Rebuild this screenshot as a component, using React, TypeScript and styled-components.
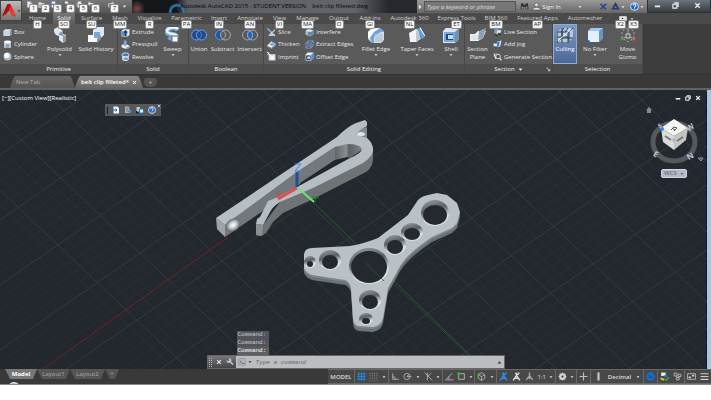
import React from "react";
import styled, { createGlobalStyle, css } from "styled-components";

const Global = createGlobalStyle`
  *, *::before, *::after { box-sizing: border-box; }
  body { margin: 0; background: #fff; font-family: "Open Sans", "Noto Sans", sans-serif; font-size: 6px; line-height: 8px; color: #dcdcdc; }
  button, input { font: inherit; color: inherit; border: 0; padding: 0; margin: 0; background: none; }
  button { white-space: nowrap; }
  svg { display: block; flex: none; }
`;

/* ---------- icons ---------- */

const paths: Record<string, React.ReactNode> = {
  box: <><path d="M1 5l3-3h11v9l-3 3H1z" fill="#dfe6ee" /><path d="M12 5l3-3v9l-3 3z" fill="#8194a8" /><path d="M1 5h11v9H1z" fill="#c9d5e1" /></>,
  cylinder: <><path d="M2 3h12v11H2z" fill="#c5d0dc" /><ellipse cx="8" cy="3.500" rx="6" ry="2.500" fill="#fff" /><path d="M5 7h6v7H5z" fill="#8fa0b2" /></>,
  sphere: <><circle cx="8" cy="8" r="7" fill="#aebccb" /><circle cx="6.500" cy="6" r="4.500" fill="#fff" /></>,
  polysolid: <><path d="M2 2l4-2 5 4v3l3 1v6l-3 2-4-3V9L4 8 2 5z" fill="#dde5ed" /><path d="M7 6l4-2v4l3 1v5l-3 2V9l-4-1z" fill="#8b9aa9" /></>,
  history: <><path d="M5 3l3-3h8v8l-3 3H5z" fill="#dde8f6" /><path d="M0 8h5V4l4 1v6h3l-3 4H0z" fill="#f5f7fa" /><path d="M6 5h6v6H6z" fill="#78a7df" /><path d="M10 11l3-3v4l-4 4v-4z" fill="#8796a6" /></>,
  extrude: <><path d="M1 5l4-3h10v10l-3 3H1z" fill="#e3ebf3" /><path d="M2 6h9v8H2z" fill="#5389c4" /><path d="M8 5v9M5 8l3-3 3 3" stroke="#173f73" strokeWidth="2" fill="none" /></>,
  presspull: <><path d="M1 9l6-3 8 4v4l-7 2-7-3z" fill="#e7ecf1" /><path d="M5 1h5v6l2 1-5 3-4-3 2-1z" fill="#79a7db" /><path d="M8 14l7-3v3l-7 2z" fill="#8797a8" /></>,
  revolve: <><path d="M2 6h12v7l-3 3H5l-3-3z" fill="#dce4ec" /><ellipse cx="8" cy="5" rx="6.500" ry="3.500" fill="#487bb5" stroke="#e1eaf4" strokeWidth="1.500" /><path d="M5 10h8v4H5z" fill="#789cc2" /></>,
  sweep: <><path d="M13 3C10-1 2 1 2 5c0 4 10 1 9 5-1 2-5 2-7 0" fill="none" stroke="#6ea3dc" strokeWidth="5" /><path d="M13 2C9-1 2 1 2 4c0 4 11 2 10 6" fill="none" stroke="#edf4fb" strokeWidth="2.500" /><path d="M7 9h6v6H7z" fill="#fff" stroke="#606a75" /></>,
  union: <><circle cx="5.500" cy="8" r="5" fill="#21498d" stroke="#70a2ee" /><circle cx="10.500" cy="8" r="5" fill="#21498d" stroke="#70a2ee" /><circle cx="5.500" cy="8" r="5" fill="none" stroke="#557fc3" /></>,
  subtract: <><circle cx="5.500" cy="8" r="5" fill="#24559e" stroke="#6294df" /><circle cx="10.500" cy="8" r="5" fill="#5b5b5b" stroke="#a6acb3" /><path d="M8 3.700a5 5 0 010 8.600" stroke="#aaa" fill="none" /></>,
  intersect: <><circle cx="5.500" cy="8" r="5" fill="none" stroke="#a6a9ad" /><circle cx="10.500" cy="8" r="5" fill="none" stroke="#a6a9ad" /><path d="M8 3.700a5 5 0 010 8.600 5 5 0 010-8.600z" fill="#2465bb" stroke="#7aa9e6" /></>,
  slice: <><path d="M1 1l13 13" stroke="#f1f3f6" strokeWidth="2" /><path d="M14 2L5 10l-3 4h10l2-2-4-3 5-5z" fill="#b8cbe0" /><path d="M1 1l7 3-2 3z" fill="#4f8ed1" /></>,
  thicken: <><path d="M0 10l8-8 8 5-8 7z" fill="#f0f4f8" /><path d="M4 8l6-5 5 4-6 4z" fill="#7eace0" /><path d="M0 10l8 4 8-7v3l-8 6-8-4z" fill="#738ba5" /></>,
  imprint: <><path d="M3 4h12v11H3z" fill="#dce4ed" /><path d="M7 8h5v5H7z" fill="#fff" /><path d="M0 0l8 8M3 0v4H0" stroke="#fff" strokeWidth="1.500" /></>,
  interfere: <><path d="M1 5l5-3 9 2v7l-5 4-9-3z" fill="#b5bec8" /><path d="M5 7l6-3 4 2v5l-5 4-5-3z" fill="#6688b0" /><path d="M1 5l5-3 9 2-5 3z" fill="#e2e7ec" /></>,
  extract: <path d="M1.500 5.500l4-4h9v9l-4 4h-9zM1.500 5.500h9v9M10.500 5.500l4-4M5.500 1.500v9h9M1.500 14.500l4-4" fill="none" stroke="#78a5df" strokeWidth="1.300" />,
  offset: <><path d="M1 5l4-4h10v10l-4 4H1z" fill="#edf4fb" /><path d="M2 6h8v8H2z" fill="#183b6c" /><path d="M4 8h5v4H4z" fill="#dbe7f4" /><path d="M11 5l4-4v10l-4 4z" fill="#5389c8" /></>,
  fillet: <><path d="M0 5l4-4h8l4 4v8l-3 3H4l-4-4z" fill="#d6dee7" /><path d="M0 5l4-4h8L6 5 2 11H0z" fill="#fff" /><path d="M6 5l6-4 4 3-5 2-5 4v6H4l-2-5z" fill="#66a4e4" /><path d="M7 7h8v8H7z" fill="#bdcad7" /></>,
  taper: <><path d="M0 6l7-4 4 1-3 12H1z" fill="#f0f3f7" /><path d="M8 2l4-2 4 10-3 2z" fill="#62a0df" /><path d="M7 4l2-1 3 9-5 3z" fill="#bdc9d6" /><path d="M11 1l5 8" stroke="#fff" /></>,
  shell: <><path d="M0 4l3-3h13v11l-4 4H0z" fill="#dce8f7" /><path d="M1 5h11v10H1z" fill="#72a9e9" /><path d="M3 7h7v6H3z" fill="#244873" /><path d="M5 8h5v4H5z" fill="#c5dff9" /><path d="M12 5l4-4v11l-4 4z" fill="#7b8fa4" /></>,
  section: <><path d="M0 7h5l3-3h8l-3 7-5 3H0z" fill="#f4f5f7" /><path d="M9 4l7-3-3 10-5 2z" fill="#90a0b1" /><path d="M1 8h7v5H1z" fill="#dfe4e9" /></>,
  live: <><path d="M2 3l6-3 3 3v5l-5 3-4-2z" fill="#6f9dce" /><path d="M7 5l8-2-2 6-6 2z" fill="#e7eaed" /><path d="M9 9l5 4M3 12l5 2" stroke="#38312b" strokeWidth="2" /></>,
  jog: <><path d="M1 6h6V3l8-2-2 10-6 2v-2H1z" fill="#dfe7f1" /><path d="M7 4l5-2-1 8-4 3z" fill="#3e83d1" /></>,
  generate: <><path d="M1 4l4-3 5 2v7H3z" fill="#777" /><circle cx="9" cy="8" r="4" fill="#4e5358" stroke="#eee" strokeWidth="1.500" /><path d="M12 11l3 4M2 3l3 9" stroke="#eee" strokeWidth="2" /></>,
  culling: <><path d="M0 5l5-4h11v10l-5 5H0z" fill="#b6c7df" /><path d="M0 5h11v11H0zM5 1v10h11M11 5l5-4M0 15l5-4M5 5v11M0 10h11M7 1L4 5M11 1L8 5M12 5v10" fill="none" stroke="#263c59" strokeWidth="1" /><path d="M1 14L14 2" stroke="#fff" /></>,
  filter: <><path d="M1 4l3-3h12v10l-4 4H1z" fill="#99c9ff" /><path d="M1 4h11v11H1z" fill="#e1efff" /><path d="M12 4l4-3v10l-4 4z" fill="#6497c6" /><circle cx="1.500" cy="14.500" r="1.500" fill="#176dd5" /></>,
  gizmo: <><path d="M8 1l6 3v7l-6 4-6-4V4z" fill="none" stroke="#aaa" strokeDasharray="2 2" /><path d="M8 2v7l6 3M8 9l-6 3" stroke="#9caab9" fill="none" /><path d="M6 7h4v4H6z" fill="#5b5b5b" stroke="#d3d3d3" /><circle cx="8" cy="1" r="1.300" fill="#4b7ab9" /><circle cx="2" cy="12" r="1.500" fill="#4c9c43" /><circle cx="14" cy="12" r="1.500" fill="#e05b42" /></>,
  doc: <><path d="M3 1h8l3 3v11H3z" fill="#f4f7fa" /><path d="M1 8h9M7 5l3 3-3 3" stroke="#146cb5" strokeWidth="2" fill="none" /></>,
  docOut: <><path d="M2 1h7l2 3v10H2z" fill="#aeb4bb" /><path d="M4 4h5M4 7h5M4 10h3" stroke="#555" /><path d="M7 11h8M12 8l3 3-3 3" stroke="#398ed0" strokeWidth="2" fill="none" /></>,
  copy: <><path d="M1 2h7v9H1z" fill="#c3c8cd" /><path d="M7 6h8v8H7z" fill="#d7eeff" stroke="#2876bc" strokeWidth="2" /><path d="M1 10v4h4" stroke="#111" strokeWidth="2" fill="none" /></>,
  help: <><circle cx="8" cy="8" r="7" fill="#2363bd" stroke="#e9f3ff" strokeWidth="1.500" /><path d="M5.500 6c0-4 5-3 5 0 0 2-2.500 1.500-2.500 4M8 11.500v1.500" fill="none" stroke="#fff" strokeWidth="2" /></>,
  binoculars: <><path d="M2 2h4v3h4V2h4l1 11h-5V9H6v4H1z" fill="#323232" /><path d="M3 8h2v4H3zM11 8h2v4h-2z" fill="#a5a5a5" /></>,
  user: <><circle cx="8" cy="5" r="3.500" fill="#d9dce0" stroke="#444" /><path d="M1 14c0-6 14-6 14 0z" fill="#e7e7e7" stroke="#444" /></>,
  exchange: <><path d="M1 3h4l9 10h-4zM11 3h4L5 13H1z" fill="#274b8d" /></>,
  share: <path d="M8 3L3 12h10zM8 2v6" fill="none" stroke="#293f6b" strokeWidth="3" />,
  wrench: <path d="M2 4a4 4 0 006 5l5 5 2-2-5-5a4 4 0 00-5-6l2 3-2 3z" fill="#c8c8c8" />,
  prompt: <><rect x="1" y="1" width="14" height="14" rx="2" fill="#aeb4bc" stroke="#7b838d" /><path d="M4 5l3 3-3 3M8 11h5" stroke="#454d58" strokeWidth="1.500" fill="none" /></>,
  grid: <path d="M3 1v14M8 1v14M13 1v14M1 3h14M1 8h14M1 13h14" stroke="#2084e0" strokeWidth="2" />,
  snap: <path d="M2 2v13M6 2v13M10 2v13M14 2v13" stroke="#aaa" strokeWidth="1.500" strokeDasharray="1.500 2.500" />,
  ortho: <path d="M3 2v11h11M3 9h4v4" fill="none" stroke="#b4b4b4" strokeWidth="1.500" />,
  polar: <><circle cx="7" cy="8" r="5.500" fill="none" stroke="#b4b4b4" strokeWidth="1.500" /><path d="M7 8h8M7 8l4-4" stroke="#b4b4b4" strokeWidth="1.500" /></>,
  iso: <path d="M1 1l14 14M6 1v14M6 8l7-6" stroke="#b4b4b4" strokeWidth="1.500" />,
  track: <path d="M1 14L13 2M1 14h14M7 8v6" stroke="#b4b4b4" strokeWidth="1.500" fill="none" />,
  osnap: <><path d="M3 3h10v10H3z" fill="none" stroke="#c0c0c0" strokeWidth="1.500" /><circle cx="3" cy="3" r="2.500" fill="#20c71f" /></>,
  osnap3: <><path d="M8 1l6 4v6l-6 4-6-4V5zM2 5l6 3 6-3M8 8v7" fill="none" stroke="#b4b4b4" strokeWidth="1.500" /><circle cx="4" cy="4" r="2.500" fill="#22bd2a" /></>,
  anno: <path d="M8 1v5L2 15M8 6l6 9M4 11h8M10 5l3-4M6 2l4 3" stroke="currentColor" strokeWidth="2.500" fill="none" />,
  annoPlain: <path d="M8 1v6L2 14M8 7l6 7M8 7v6" stroke="#a5a5a5" strokeWidth="2.500" fill="none" />,
  gear: <><path d="M8 1v14M1 8h14M3 3l10 10M13 3L3 13" stroke="#d4d4d4" strokeWidth="2" /><circle cx="8" cy="8" r="4" fill="none" stroke="#d4d4d4" strokeWidth="4" /><circle cx="8" cy="8" r="2" fill="#444" /></>,
  plus: <path d="M8 1v14M1 8h14" stroke="#c0c0c0" strokeWidth="2" />,
  unit: <path d="M6 1h4v14H6zM6 5h2M6 9h2M6 13h2" fill="#ddd" stroke="#777" />,
  quick: <><circle cx="8" cy="8" r="7.500" fill="#146fd0" /><path d="M4 9a4 4 0 007-2M5 5l6 6" stroke="#123c73" strokeWidth="1.500" fill="none" /></>,
  isolate: <><path d="M2 1h8v6H2z" fill="#e6edf5" /><path d="M6 7l6-3v6z" fill="#3477c9" /><path d="M1 11l6 3" stroke="#e6cf2b" strokeWidth="3" /><path d="M8 12l3 3 5-6" stroke="#3bb644" strokeWidth="2" fill="none" /></>,
  perf: <path d="M2 2h5v5H2zM9 4h5v4H9zM6 10h5v4H6zM5 7l3 3M11 8l-2 3" fill="none" stroke="#bcbcbc" strokeWidth="1.500" />,
  clean: <><path d="M1 3h14v10H1z" fill="none" stroke="#bcbcbc" strokeWidth="1.500" /><path d="M3 8h4v3H3zM9 5h4v3H9z" fill="#ccc" /></>,
  menu: <path d="M1 3h14M1 8h14M1 13h14" stroke="#d0d0d0" strokeWidth="2" />,
  page: <><path d="M3 1h7l4 4v10H3z" fill="#eee" /><path d="M10 1v4h4" stroke="#777" fill="none" /></>,
  folder: <><path d="M1 3h6l2 2h6v10H1z" fill="#ddd" /><path d="M1 8h14v7H1z" fill="#b2b2b2" /></>,
  save: <><path d="M1 1h14v14H1z" fill="#5d7ca4" /><path d="M4 1h8v5H4zM4 9h8v6H4z" fill="#eee" /></>,
  saveAs: <><path d="M1 1h14v14H1z" fill="#52637a" /><path d="M4 1h8v5H4z" fill="#eee" /><path d="M6 13l9-8" stroke="#e9872e" strokeWidth="3" /></>,
  print: <><path d="M1 5h14v8H1z" fill="#aaa" /><path d="M4 1h8v5H4zM4 10h8v5H4z" fill="#eee" /></>,
  undo: <path d="M5 2L1 6l4 4M1 6h8c5 0 5 7 1 8" fill="none" stroke="#e5e5e5" strokeWidth="2.500" />,
  redo: <path d="M11 2l4 4-4 4M15 6H7c-5 0-5 7-1 8" fill="none" stroke="#c5c5c5" strokeWidth="2.500" />,
  logo: <><path d="M8 0h4l8 18-6-2-4-7-4 6-6 3z" fill="#d62020" /><path d="M8 0l3 0 2 8-8 5-5 5z" fill="#a81014" /><path d="M11 3l9 15-6-2-4-7z" fill="#ef3b31" /></>,
  restore: <path d="M5 2h9v8h-3M2 5h9v9H2z" fill="none" stroke="currentColor" strokeWidth="2.500" />,
  close: <path d="M3 3l10 10M13 3L3 13" stroke="currentColor" strokeWidth="3" />,
  minimise: <path d="M2 10h12" stroke="currentColor" strokeWidth="4" />,
  caret: <path d="M2 5h12l-6 7z" fill="currentColor" />,
  caretUp: <path d="M2 11h12L8 4z" fill="currentColor" />,
  play: <path d="M5 2v12l7-6z" fill="currentColor" />,
  corner: <path d="M3 3h3M3 3v3M5 5l7 7M12 6v6H6" stroke="currentColor" strokeWidth="2" fill="none" />,
};

const Icon = ({ name, size = 9 }: { name: string; size?: number }) => (
  <svg width={size} height={size} viewBox={name === "logo" ? "0 0 20 20" : "0 0 16 16"} aria-hidden="true">{paths[name]}</svg>
);

/* ---------- header ---------- */

const Header = styled.header`
  display: grid; grid-template-columns: 22px 1fr; grid-template-rows: 13px 11px; background: #4a4a4a;
`;
const AppButton = styled.button`
  grid-row: 1 / 3; height: 21px; display: flex; align-items: center; gap: 1px; padding-left: 1px; color: #333;
  background: linear-gradient(#bdbdbd, #777); border: 1px solid #444;
`;
const TitleBar = styled.div`display: flex; min-width: 0; background: linear-gradient(#8d8d8d, #656565);`;
const QuickAccess = styled.div`
  flex: none; width: 110px; display: flex; align-items: center; padding-left: 4px; color: #ddd;
  background: linear-gradient(#777, #555);
`;
const QuickButton = styled.button<{ $w: number }>`
  position: relative; width: ${p => p.$w}px; height: 11px; display: flex; align-items: flex-start;
`;
const KeyTip = styled.span`
  position: absolute; z-index: 2; padding: 0 1px; min-width: 7px; height: 7px; line-height: 7px; text-align: center;
  color: #222; background: #f6f6f6; box-shadow: 0 0 0 1px #8a8a8a; border-radius: 1px; font-size: 6px;
`;
const QuickTip = styled(KeyTip)`left: 4px; top: 4px;`;
const Caption = styled.h1`
  flex: 1 1 0; min-width: 0; margin: 0; padding-left: 48px; font-size: 6px; font-weight: 400; line-height: 12px; white-space: pre; overflow: hidden;
  color: #050505;
  background:
    radial-gradient(ellipse 8px 9px at 5px 9px, #7a4a43, transparent),
    radial-gradient(circle at 45px 12px, transparent 5px, #2a79a8 6px, #2a79a8 7px, transparent 9px),
    linear-gradient(90deg, transparent 44px, #5c6064 56px, #62666a 78%, #25282d 90%),
    #15171b;
`;
const SearchArea = styled.div`
  flex: none; width: 230px; display: flex; align-items: center; background: linear-gradient(#999, #676767);
  color: #eee;
`;
const Search = styled.input`
  width: 92px; height: 11px; margin-right: 4px; padding: 0 2px; background: #777; border: 1px solid #555; font-style: italic;
  &::placeholder { color: #dedede; opacity: 1; }
`;
const BarButton = styled.button<{ $w: number }>`
  width: ${p => p.$w}px; height: 11px; display: flex; align-items: center; justify-content: center; gap: 1px;
`;
const WindowButtons = styled.div`
  flex: none; width: 64px; display: flex; justify-content: space-around; color: #eee;
  background: linear-gradient(#6b747a, #363e43); border: 1px solid #283138; border-top: 0;
`;
const MenuTabs = styled.nav`display: flex; min-width: 0;`;
const MenuTab = styled.button<{ $w: number; $on?: boolean }>`
  position: relative; flex: none; width: ${p => p.$w}px; height: 11px; line-height: 10px; color: #d2d2d2;
  display: flex; justify-content: center;
  ${p => p.$on && css`background: linear-gradient(#777, #5c5c5c); color: #eee;`}
`;
const MenuTip = styled(KeyTip)`top: 8px; align-self: center;`;
const StateButton = styled(MenuTab)`margin-left: 3px; align-items: center; gap: 3px;`;
const Pill = styled.span`width: 8px; height: 5px; border-radius: 1px; background: #e2e2e2; border: 1px solid #ccc; display: grid; place-items: center; color: #333;`;
const StateTip = styled(KeyTip)<{ $right?: boolean }>`top: 8px; left: ${p => (p.$right ? 19 : 6)}px;`;

/* ---------- ribbon ---------- */

const Ribbon = styled.section`display: flex; height: 51px; background: #3c3c3c; border-bottom: 1px solid #333;`;
const Panel = styled.section<{ $w: number }>`
  flex: none; width: ${p => p.$w}px; display: flex; flex-direction: column; background: #5a5a5a; border-right: 1px solid #474747;
`;
const PanelBody = styled.div`flex: 1; display: flex; min-height: 0;`;
const PanelTitle = styled.h2`
  margin: 0; height: 10px; display: flex; align-items: center; justify-content: center; gap: 3px; position: relative;
  font-size: 6px; line-height: 10px; font-weight: 400; color: #f2f2f2; background: #4d4d4d;
`;
const Launcher = styled.button`position: absolute; right: 1px; top: 3px;`;
const SmallColumn = styled.div<{ $w: number }>`
  flex: none; width: ${p => p.$w}px; padding: 2px 0 1px 3px; display: grid; grid-template-rows: repeat(3, 1fr);
`;
const SmallButton = styled.button`display: flex; align-items: center; gap: 2px; text-align: left; color: #e8e8e8;`;
const BigButton = styled.button<{ $w: number; $on?: boolean }>`
  flex: none; width: ${p => p.$w}px; padding-top: 3px; display: flex; flex-direction: column; align-items: center; line-height: 8px; color: #e8e8e8;
  ${p => p.$on && css`background: linear-gradient(#7e9bc6, #4a6696); outline: 1px solid #8fabd6; outline-offset: -1px; color: #fff;`}
`;
const BigLabel = styled.span`margin-top: 2px; white-space: pre; text-align: center;`;

type Big = { icon: string; label: string; w: number; caret?: boolean; on?: boolean; size?: number };
const BigTool = ({ icon, label, w, caret, on, size = 16 }: Big) => (
  <BigButton $w={w} $on={on}>
    <Icon name={icon} size={size} />
    <BigLabel>{label}</BigLabel>
    {caret && <Icon name="caret" size={4} />}
  </BigButton>
);
const SmallTools = ({ w, items }: { w: number; items: [string, string][] }) => (
  <SmallColumn $w={w}>
    {items.map(([icon, label]) => <SmallButton key={label}><Icon name={icon} size={9} />{label}</SmallButton>)}
  </SmallColumn>
);

/* ---------- drawing tabs ---------- */

const FileTabs = styled.nav`display: flex; align-items: flex-end; height: 15px; padding-left: 10px; background: #393939; border-bottom: 2px solid #626262;`;
const FileTab = styled.button<{ $w: number; $on?: boolean }>`
  width: ${p => p.$w}px; height: 12px; padding: 0 6px; display: flex; align-items: center; justify-content: space-between;
  clip-path: polygon(0 100%, 3px 3px, 5px 0, calc(100% - 5px) 0, calc(100% - 3px) 3px, 100% 100%);
  background: ${p => (p.$on ? "linear-gradient(#888, #646464)" : "linear-gradient(#666, #555)")};
  color: ${p => (p.$on ? "#fff" : "#b2b2b2")};
  font-weight: ${p => (p.$on ? 600 : 400)};
`;
const AddTab = styled.button`width: 13px; height: 9px; margin: 0 0 1px 1px; border-radius: 3px 3px 5px 5px; background: #555; color: #ccc; line-height: 8px;`;

/* ---------- viewport ---------- */

const Viewport = styled.main`
  position: relative; display: flex; flex-direction: column; height: 279px; background: #23272e; overflow: hidden;
  border-right: 4px solid #a9c6e0; box-shadow: inset -1px 0 #15171b;
`;
const Scene = styled.svg`position: absolute; inset: 0; width: 100%; height: 100%;`;
const ViewHead = styled.div`position: relative; display: flex; justify-content: space-between; padding: 4px 6px 0 2px; color: #fff;`;
const ViewButtons = styled.div`display: flex; gap: 4px;`;
const FloatBar = styled.div`
  position: absolute; left: 105px; top: 14px; width: 56px; height: 12px; display: flex; align-items: center; gap: 4px; padding-left: 2px;
  background: #56585b;
`;
const Grip = styled.span`width: 1px; height: 7px; background: #1d1d1d;`;
const BarClose = styled.button`align-self: flex-start; margin-left: -3px; color: #ddd;`;
const CubeArea = styled.div`position: absolute; right: 0; top: 15px; width: 65px; height: 75px;`;
const Wcs = styled.button`
  position: absolute; left: 19px; top: 64px; width: 26px; height: 9px; line-height: 7px; display: flex; align-items: center; justify-content: center; gap: 3px;
  background: #b5b8c6; border: 1px solid #d3d5df; border-radius: 2px; color: #555b6c;
`;
const Console = styled.div`
  position: relative; margin-top: auto; margin-left: 4px; align-self: center; width: 298px; font-family: "Liberation Mono", monospace;
`;
const History = styled.ol`list-style: none; margin: 0 0 0 30px; padding: 0; width: 32px;`;
const HistoryLine = styled.li`
  height: 8px; line-height: 8px; padding-left: 1px; background: #51545a; color: #ccc;
  &:last-child { color: #fff; background: #5d5f63; }
`;
const CommandLine = styled.div`display: flex; height: 14px; border: 1px solid #666;`;
const CommandTools = styled.div`flex: none; width: 28px; display: flex; align-items: center; justify-content: space-around; background: linear-gradient(#777, #444); color: #e4e4e4;`;
const CommandGrip = styled.span`width: 3px; height: 9px; border-left: 1px dotted #bbb; border-right: 1px dotted #bbb;`;
const CommandField = styled.label`flex: 1; display: flex; align-items: center; gap: 2px; padding: 0 2px; background: #bbbdbe; color: #333;`;
const CommandInput = styled.input`flex: 1; min-width: 0; height: 10px; padding-left: 2px; font-style: italic; &::placeholder { color: #666; opacity: 1; }`;

const gridA = Array.from({ length: 70 }, (_, i) => i - 48);
const gridB = Array.from({ length: 62 }, (_, i) => i);

const holes: [number, number, number, number][] = [
  [369, 266, 20, 18], [330, 260, 11, 10], [310, 262, 6, 6], [395, 245, 11, 10],
  [412, 232, 11, 9], [435, 213, 14, 13], [370, 300, 11, 10], [366, 319, 7, 6],
];
const plate = "M304 254Q305 248 312 248L350 246Q366 243 378 238L408 215L418 200Q422 196 428 195L437 193L447 195L457 203L460 212L457 223L452 228L432 237Q417 247 407 257Q400 265 397 272L388 288L383 318Q382 325 373 327L358 326Q353 324 353 318L351 288Q350 282 345 280L312 275Q306 273 304 268Z";

const Model = () => (
  <Scene viewBox="0 90 707 279" preserveAspectRatio="xMidYMid slice" role="img" aria-label="Belt clip model">
    <defs>
      <linearGradient id="rim" x1="0" y1="0" x2="0.3" y2="1"><stop offset="0" stopColor="#e2e5e7" /><stop offset=".12" stopColor="#8a9094" /><stop offset=".45" stopColor="#5a5f63" /><stop offset=".8" stopColor="#dde1e4" /></linearGradient>
      <linearGradient id="wall"><stop offset="0" stopColor="#62666a" /><stop offset=".4" stopColor="#8a8f93" /><stop offset=".5" stopColor="#5b5f63" /><stop offset="1" stopColor="#85898d" /></linearGradient>
      <radialGradient id="shine"><stop offset="0" stopColor="#fff" /><stop offset=".4" stopColor="#d6d9dc" /><stop offset="1" stopColor="#5f646a" /></radialGradient>
    </defs>
    {gridA.map(i => <path key={i} d={`M0 ${-90 + i * 14}L707 ${582 + i * 14}`} stroke={i % 5 ? "#2a2f37" : "#343a43"} />)}
    {gridB.map(i => <path key={i} d={`M0 ${90 + i * 13}L707 ${i * 13 - 400}`} stroke={i % 5 ? "#2a2f37" : "#343a43"} />)}
    <path d="M43 369L228 237" stroke="#6d2529" />
    <path d="M313 202L484 369" stroke="#235f2a" />

    <path d="M359 138L367 128V138L373 149V160Q372 168 366 172L313 199L283 213L273 222L266 233Q262 237 256 235V224L263 225L280 202L362 160Z" fill="#6e7476" />
    <path d="M225 225L297 172L335 147V160L300 184L260 213L225 237Z" fill="#73777e" />
    <path d="M335 147Q347 141 358 144L363 149L350 158L335 160Z" fill="url(#wall)" />
    <path d="M300 183L335 160L347 157L350 158L302 186Z" fill="#22252d" />
    <path d="M216 218L225 225V237L217 229Z" fill="#9da3a8" />
    <path fillRule="evenodd" d="M216 218L280 175L337 137Q348 126 356 123L365 120L367 122V126Q361 129 358 135L367 138Q374 144 373 151Q372 157 363 163L313 188L280 202Q272 207 269 214L263 225L256 224L257 219L260 217L268 201L278 197L297 187L350 158Q362 153 362 149Q360 144 347 144L335 147L297 172L225 225Z" fill="#b6bdc4" />
    <path d="M356 134Q361 128 367 127V138Z" fill="#858a90" /><ellipse cx="361" cy="134" rx="4" ry="2" fill="#e0e2e4" />
    <path d="M256 224L263 225L262 236L256 235Z" fill="#8a8f93" />
    <ellipse cx="233" cy="225" rx="8" ry="6" transform="rotate(-35 233 225)" fill="url(#shine)" />

    <path d={plate} transform="translate(0 5)" fill="#6b7275" />
    <path d={plate} transform="translate(0 2)" fill="#7d8588" />
    <path d={plate} fill="#b9c1c7" />
    {holes.map(([x, y, rx, ry]) => (
      <g key={`${x}-${y}`}>
        <ellipse cx={x} cy={y} rx={rx} ry={ry} fill="url(#rim)" />
        <ellipse cx={x} cy={y + (rx > 15 ? 1 : 2)} rx={rx > 11 ? rx - 2 : rx - 3} ry={rx > 15 ? ry - 2 : ry - 3} fill="#25292f" />
      </g>
    ))}
    <path d="M366 263L384 281" stroke="#235f2a" opacity=".8" />

    <path d="M297 188L278 199" stroke="#e04f50" strokeWidth="3" />
    <path d="M298 188L314 202" stroke="#76e270" strokeWidth="2" />
    <path d="M297 187V172" stroke="#244f92" strokeWidth="3" />
    <path d="M295 164H301L295 171H302" stroke="#3f86e8" fill="none" />
    <path d="M277 192L281 198M281 192L277 198" stroke="#d34747" fill="none" />
    <path d="M313 196L315 199L319 197M315 199V202" stroke="#1f7e28" fill="none" />
  </Scene>
);

const ViewCube = () => (
  <CubeArea>
    <svg width="65" height="62" viewBox="642 105 65 62" role="img" aria-label="View cube">
      <ellipse cx="674" cy="142" rx="21" ry="19" fill="none" stroke="#54585f" strokeWidth="5" />
      <path d="M646 110l3-3 3 3h-1v3h-4v-3z" fill="#848a93" />
      <path d="M661 128L674 119L688 128L674 136Z" fill="#f5f5f3" />
      <path d="M661 128L674 136V150L663 142Z" fill="#dadad8" />
      <path d="M688 128L674 136V150L686 140Z" fill="#c4c4c2" />
      <path d="M671 130l3-3 3 1-3 3M672 128l3 2" stroke="#4b4b4b" fill="none" />
      <path d="M665 136l6 4M677 141l6-4" stroke="#777" strokeWidth="2" fill="none" />
      <circle cx="662" cy="129" r="2" fill="#3388e5" /><circle cx="674" cy="140" r="2" fill="#a9b9c9" />
      <g fontSize="8" fontWeight="700" fill="#c4c4c4" textAnchor="middle">
        <text x="660" y="128" fontSize="6" transform="rotate(-30 660 126)">S</text>
        <text x="690" y="130" transform="rotate(-35 690 127)">W</text>
        <text x="656" y="157" transform="rotate(30 656 154)">E</text>
        <text x="690" y="159" transform="rotate(-30 690 156)">N</text>
      </g>
      <path d="M698 158h5l-2 3z" fill="#555a61" stroke="#898d93" />
    </svg>
    <Wcs>WCS <Icon name="caret" size={4} /></Wcs>
  </CubeArea>
);

/* ---------- footer ---------- */

const Footer = styled.footer`
  position: relative; display: flex; align-items: flex-start; height: 16px; background: #393939; border-bottom: 1px solid #888; overflow: hidden; padding-left: 5px;
`;
const LayoutTab = styled.button<{ $w: number; $on?: boolean }>`
  width: ${p => p.$w}px; height: 10px; line-height: 9px;
  clip-path: polygon(0 0, 100% 0, calc(100% - 4px) 100%, 5px 100%);
  background: ${p => (p.$on ? "#777" : "#555")}; color: ${p => (p.$on ? "#fff" : "#aaa")}; font-weight: ${p => (p.$on ? 700 : 400)};
`;
const Orb = styled.span`position: absolute; left: 7px; top: 13px; width: 14px; height: 14px; border-radius: 50%; background: #a9cce2; border: 1px solid #d6e8f4;`;
const Status = styled.div`margin-left: auto; display: flex; gap: 1px; height: 15px; padding: 1px 0; background: #686868;`;
const StatusGroup = styled.div<{ $w: number }>`
  width: ${p => p.$w}px; display: flex; align-items: center; justify-content: space-around; background: #484848; color: #ddd;
`;
const StatusButton = styled.button<{ $blue?: boolean; $strong?: boolean }>`
  display: flex; align-items: center; gap: 3px; color: ${p => (p.$blue ? "#2b8ff0" : "#ddd")}; font-weight: ${p => (p.$strong ? 600 : 400)};
`;

const menus: [string, string, number][] = [
  ["Home", "H", 31], ["Solid", "SO", 22], ["Surface", "SU", 33], ["Mesh", "MM", 24], ["Visualize", "R", 35], ["Parametric", "PA", 39],
  ["Insert", "IN", 26], ["Annotate", "AN", 36], ["View", "VI", 23], ["Manage", "MA", 33], ["Output", "O", 30], ["Add-ins", "GI", 32],
  ["Autodesk 360", "NL", 47], ["Express Tools", "ET", 47], ["BIM 360", "BM", 32], ["Featured Apps", "AP", 51], ["Automesher", "", 44],
];
const quick: [string, number][] = [["page", 12], ["folder", 12], ["save", 13], ["saveAs", 13], ["print", 12], ["undo", 19], ["redo", 15]];

const statusGroups: [number, string[]][] = [
  [33, ["grid", "snap", "caret"]], [53, ["ortho", "polar", "caret", "iso", "caret"]], [31, ["track", "osnap", "caret"]], [21, ["osnap3", "caret"]],
];
const StatusIcon = ({ name, blue, label }: { name: string; blue?: boolean; label?: string }) => (
  <StatusButton $blue={blue} aria-label={label || name}><Icon name={name} size={name === "caret" ? 4 : 9} /></StatusButton>
);

export default function App() {
  return (
    <>
      <Global />
      <Header>
        <AppButton aria-label="Application menu"><Icon name="logo" size={14} /><Icon name="caret" size={4} /></AppButton>
        <TitleBar>
          <QuickAccess>
            {quick.map(([icon, w], i) => (
              <QuickButton key={icon} $w={w} aria-label={icon}><Icon name={icon} size={7} /><QuickTip>{i + 1}</QuickTip></QuickButton>
            ))}
            <Icon name="caret" size={5} />
          </QuickAccess>
          <Caption>{"Autodesk AutoCAD 2015 - STUDENT VERSION    belt clip filleted.dwg"}</Caption>
          <SearchArea>
            <BarButton $w={7} aria-label="Collapse"><Icon name="play" size={6} /></BarButton>
            <Search aria-label="Search" placeholder="Type a keyword or phrase" />
            <BarButton $w={10} aria-label="Find"><Icon name="binoculars" size={9} /></BarButton>
            <BarButton $w={34}><Icon name="user" size={9} />Sign In</BarButton>
            <BarButton $w={34} aria-label="Account menu"><Icon name="caret" size={4} /></BarButton>
            <BarButton $w={12} aria-label="Exchange"><Icon name="exchange" size={9} /></BarButton>
            <BarButton $w={18} aria-label="Community"><Icon name="share" size={9} /><Icon name="caret" size={4} /></BarButton>
            <BarButton $w={20} aria-label="Help"><Icon name="help" size={9} /><Icon name="caret" size={4} /></BarButton>
          </SearchArea>
          <WindowButtons>
            <BarButton $w={14} aria-label="Minimise"><Icon name="minimise" size={7} /></BarButton>
            <BarButton $w={14} aria-label="Restore"><Icon name="restore" size={7} /></BarButton>
            <BarButton $w={22} aria-label="Close"><Icon name="close" size={7} /></BarButton>
          </WindowButtons>
        </TitleBar>
        <MenuTabs>
          {menus.map(([name, tip, w]) => (
            <MenuTab key={name} $w={w} $on={name === "Solid"}>{name}{tip && <MenuTip>{tip}</MenuTip>}</MenuTab>
          ))}
          <StateButton $w={32} aria-label="Ribbon state">
            <Pill><Icon name="caretUp" size={3} /></Pill><Icon name="caret" size={4} />
            <StateTip>X2</StateTip><StateTip $right>X3</StateTip>
          </StateButton>
        </MenuTabs>
      </Header>

      <Ribbon>
        <Panel $w={118}>
          <PanelBody>
            <SmallTools w={44} items={[["box", "Box"], ["cylinder", "Cylinder"], ["sphere", "Sphere"]]} />
            <BigTool icon="polysolid" label="Polysolid" w={31} caret />
            <BigTool icon="history" label="Solid History" w={42} />
          </PanelBody>
          <PanelTitle>Primitive</PanelTitle>
        </Panel>
        <Panel $w={71}>
          <PanelBody>
            <SmallTools w={39} items={[["extrude", "Extrude"], ["presspull", "Presspull"], ["revolve", "Revolve"]]} />
            <BigTool icon="sweep" label="Sweep" w={31} caret />
          </PanelBody>
          <PanelTitle>Solid</PanelTitle>
        </Panel>
        <Panel $w={75}>
          <PanelBody>
            <BigTool icon="union" label="Union" w={20} />
            <BigTool icon="subtract" label="Subtract" w={27} />
            <BigTool icon="intersect" label="Intersect" w={27} />
          </PanelBody>
          <PanelTitle>Boolean</PanelTitle>
        </Panel>
        <Panel $w={201}>
          <PanelBody>
            <SmallTools w={38} items={[["slice", "Slice"], ["thicken", "Thicken"], ["imprint", "Imprint"]]} />
            <SmallTools w={54} items={[["interfere", "Interfere"], ["extract", "Extract Edges"], ["offset", "Offset Edge"]]} />
            <BigTool icon="fillet" label="Fillet Edge" w={40} caret />
            <BigTool icon="taper" label="Taper Faces" w={42} caret />
            <BigTool icon="shell" label="Shell" w={26} caret />
          </PanelBody>
          <PanelTitle>Solid Editing</PanelTitle>
        </Panel>
        <Panel $w={88}>
          <PanelBody>
            <BigTool icon="section" label={"Section\nPlane"} w={25} />
            <SmallTools w={62} items={[["live", "Live Section"], ["jog", "Add Jog"], ["generate", "Generate Section"]]} />
          </PanelBody>
          <PanelTitle>Section <Icon name="caret" size={5} /><Launcher aria-label="Section settings"><Icon name="corner" size={5} /></Launcher></PanelTitle>
        </Panel>
        <Panel $w={90}>
          <PanelBody>
            <BigTool icon="culling" label="Culling" w={24} on />
            <BigTool icon="filter" label="No Filter" w={36} caret />
            <BigTool icon="gizmo" label={"Move\nGizmo"} w={29} />
          </PanelBody>
          <PanelTitle>Selection</PanelTitle>
        </Panel>
      </Ribbon>

      <FileTabs>
        <FileTab $w={65}>New Tab</FileTab>
        <FileTab $w={68} $on>belt clip filleted*<Icon name="close" size={5} /></FileTab>
        <AddTab aria-label="New drawing">+</AddTab>
      </FileTabs>

      <Viewport>
        <Model />
        <ViewHead>
          <span>[−][Custom View][Realistic]</span>
          <ViewButtons>
            <button aria-label="Minimise view"><Icon name="minimise" size={6} /></button>
            <button aria-label="Restore view"><Icon name="restore" size={6} /></button>
            <button aria-label="Close view"><Icon name="close" size={6} /></button>
          </ViewButtons>
        </ViewHead>
        <FloatBar>
          <Grip />
          {["doc", "docOut", "copy", "help"].map(n => <button key={n} aria-label={n}><Icon name={n} size={8} /></button>)}
          <BarClose aria-label="Close toolbar"><Icon name="close" size={4} /></BarClose>
        </FloatBar>
        <ViewCube />
        <Console>
          <History>
            <HistoryLine>Command:</HistoryLine><HistoryLine>Command:</HistoryLine><HistoryLine>Command:</HistoryLine>
          </History>
          <CommandLine>
            <CommandTools><CommandGrip /><Icon name="close" size={6} /><Icon name="wrench" size={8} /></CommandTools>
            <CommandField>
              <Icon name="prompt" size={8} /><Icon name="caret" size={4} />
              <CommandInput aria-label="Command" placeholder="Type a command" />
              <Icon name="caretUp" size={5} />
            </CommandField>
          </CommandLine>
        </Console>
      </Viewport>

      <Footer>
        <LayoutTab $w={32} $on>Model</LayoutTab>
        <LayoutTab $w={33}>Layout1</LayoutTab>
        <LayoutTab $w={35}>Layout2</LayoutTab>
        <LayoutTab $w={14} aria-label="New layout">+</LayoutTab>
        <Orb />
        <Status>
          <StatusGroup $w={26}><StatusButton $strong>MODEL</StatusButton></StatusGroup>
          {statusGroups.map(([w, items]) => (
            <StatusGroup key={items[0]} $w={w}>{items.map((n, i) => <StatusIcon key={i} name={n} />)}</StatusGroup>
          ))}
          <StatusGroup $w={58}>
            <StatusIcon name="anno" blue label="Annotation visibility" /><StatusIcon name="anno" label="Auto scale" /><StatusIcon name="annoPlain" label="Annotation" />
            <StatusButton>1:1<Icon name="caret" size={4} /></StatusButton>
          </StatusGroup>
          <StatusGroup $w={20}><StatusIcon name="gear" /><StatusIcon name="caret" /></StatusGroup>
          <StatusGroup $w={13}><StatusIcon name="plus" /></StatusGroup>
          <StatusGroup $w={52}><StatusIcon name="unit" /><StatusButton $strong>Decimal</StatusButton><StatusIcon name="caret" /></StatusGroup>
          <StatusGroup $w={13}><StatusIcon name="quick" /></StatusGroup>
          <StatusGroup $w={26}><StatusIcon name="isolate" /><StatusIcon name="perf" /></StatusGroup>
          <StatusGroup $w={26}><StatusIcon name="clean" /><StatusIcon name="menu" /></StatusGroup>
        </Status>
      </Footer>
    </>
  );
}
